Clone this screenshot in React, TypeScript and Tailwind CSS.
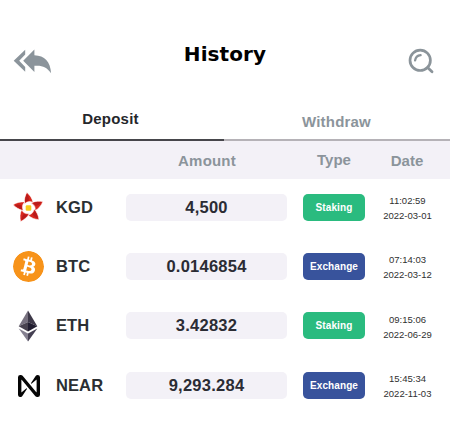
import type { ReactNode } from "react";
import { SiBitcoin } from "react-icons/si";

function BackIcon() {
  return (
    <svg viewBox="0 0 40 26" className="block h-[26px] w-[40px] fill-[#8b949b]">
      <path d="M12.2 1.8 0.7 12.8 12.2 23.7V18.9L6.2 12.8 12.2 6.6Z" />
      <path d="M21.4 1.6 10.2 12.8 21.4 23.9V17.8C28.6 17 34 19 38.1 25.2 37.4 13.6 31.6 7.5 21.4 7.2Z" />
    </svg>
  );
}

function SearchIcon() {
  return (
    <svg viewBox="0 0 28 28" className="block size-[28px]" fill="none" stroke="#8b949a">
      <circle cx="12.2" cy="12.3" r="10.2" strokeWidth="2.7" />
      <path d="M7.1 12.4C7.6 9.3 9.6 7.4 12.6 7.1" strokeWidth="2.3" strokeLinecap="round" />
      <path d="m19.6 19.6 4.4 4.2" strokeWidth="2.8" strokeLinecap="round" />
    </svg>
  );
}

function KgdLogo() {
  return (
    <svg viewBox="-16.5 -16 32 32" className="block size-[32px]">
      {[0, 72, 144, 216, 288].map((angle) => (
        <g key={angle} transform={`rotate(${angle})`}>
          <path d="M-1.6 -15.6C1.6 -12.8 3.6 -10 4.6 -5.2 1.8 -7.2 -1 -6.6 -4 -4.2 -4.4 -8.6 -3.4 -12.6 -1.6 -15.6Z" fill="#d8271d" stroke="#ffffff" strokeWidth="0.5" />
          <path d="M-1.5 -14C-0.2 -12.4 0.5 -10.4 0.4 -7.6 -1.2 -7.2 -2.4 -6.6 -3.5 -5.6 -3.5 -8.8 -2.8 -11.6 -1.5 -14Z" fill="#b81b1b" />
        </g>
      ))}
      <rect x="-2.8" y="-2.8" width="5.6" height="5.6" rx="1.2" fill="#f8cb1e" />
    </svg>
  );
}

function BtcLogo() {
  return <SiBitcoin className="block size-[31px] rounded-full bg-white text-[#f7931a]" />;
}

function EthLogo() {
  return (
    <svg viewBox="0 0 20 32" className="block h-[32px] w-[20px]">
      <path d="M10 0.5 0.7 16.3 10 12Z" fill="#77717f" />
      <path d="M10 0.5 19.3 16.3 10 12Z" fill="#3d3848" />
      <path d="M10 12 0.7 16.3 10 21.4Z" fill="#48424f" />
      <path d="M10 12 19.3 16.3 10 21.4Z" fill="#211d30" />
      <path d="M0.7 18.4 10 23.5V31.5Z" fill="#858090" />
      <path d="M19.3 18.4 10 23.5V31.5Z" fill="#454052" />
    </svg>
  );
}

function NearLogo() {
  return (
    <svg viewBox="0 0 24 24" className="ml-px block size-[22px] fill-[#050505]">
      <path d="M21.443 0c-.89 0-1.714.46-2.18 1.218l-5.017 7.448a.533.533 0 0 0 .792.7l4.938-4.282a.2.2 0 0 1 .334.151v13.41a.2.2 0 0 1-.354.128L5.03.905A2.555 2.555 0 0 0 3.078 0h-.521A2.557 2.557 0 0 0 0 2.557v18.886a2.557 2.557 0 0 0 4.736 1.338l5.017-7.448a.533.533 0 0 0-.792-.7l-4.938 4.283a.2.2 0 0 1-.333-.152V5.352a.2.2 0 0 1 .354-.128l14.924 17.87c.486.574 1.2.905 1.952.906h.521A2.558 2.558 0 0 0 24 21.445V2.557A2.558 2.558 0 0 0 21.443 0Z" />
    </svg>
  );
}

type Entry = {
  coin: string;
  logo: ReactNode;
  amount: string;
  type: "Staking" | "Exchange";
  time: string;
  date: string;
  height: string;
  dateOffset: string;
};

const entries: Entry[] = [
  { coin: "KGD", logo: <KgdLogo />, amount: "4,500", type: "Staking", time: "11:02:59", date: "2022-03-01", height: "h-[59px]", dateOffset: "-mt-px" },
  { coin: "BTC", logo: <BtcLogo />, amount: "0.0146854", type: "Exchange", time: "07:14:03", date: "2022-03-12", height: "h-[59px]", dateOffset: "-mt-px" },
  { coin: "ETH", logo: <EthLogo />, amount: "3.42832", type: "Staking", time: "09:15:06", date: "2022-06-29", height: "h-[60px]", dateOffset: "mt-0" },
  { coin: "NEAR", logo: <NearLogo />, amount: "9,293.284", type: "Exchange", time: "15:45:34", date: "2022-11-03", height: "h-[59px]", dateOffset: "-mt-px" },
];

const badgeColor = { Staking: "bg-[#2abb7f]", Exchange: "bg-[#38539c]" };

function Row({ entry }: { entry: Entry }) {
  return (
    <div className={`flex items-start ${entry.height}`}>
      <div className="flex h-[27px] w-[56px] items-center justify-center">{entry.logo}</div>
      <div className="w-[70px] text-[16.5px] leading-[27px] font-bold tracking-[0.1px] text-[#2b2f33]">{entry.coin}</div>
      <div className="h-[27px] w-[161px] rounded-[5px] bg-[#f3f1f7] text-center text-[16.5px] leading-[27px] font-bold tracking-[0.25px] text-[#2b2c34]">
        {entry.amount}
      </div>
      <div className={`ml-4 h-[27px] w-[62px] rounded-[5px] text-center text-[10px] leading-[27px] font-bold tracking-[0.1px] text-white ${badgeColor[entry.type]}`}>
        {entry.type}
      </div>
      <div className={`ml-[10px] w-[65px] text-center text-[9.5px] leading-[15px] text-[#303030] ${entry.dateOffset}`}>
        <div>{entry.time}</div>
        <div>{entry.date}</div>
      </div>
    </div>
  );
}

export default function App() {
  return (
    <div className="h-[444px] w-[450px] overflow-hidden bg-white font-['Liberation_Sans',Arial,sans-serif]">
      <header className="flex h-[95px] items-start pr-[14px] pl-[13px]">
        <button className="mt-[48px]" aria-label="Back"><BackIcon /></button>
        <h1 className="mt-[42px] mr-[11px] flex-1 text-center font-['DejaVu_Sans',Verdana,sans-serif] text-[20px] leading-[24px] font-bold tracking-[0.1px] text-black">History</h1>
        <button className="mt-[48px]" aria-label="Search"><SearchIcon /></button>
      </header>
      <nav className="flex h-[46px] text-[15px] leading-[18px] font-bold tracking-[0.2px]">
        <button className="flex w-[224px] items-start justify-center border-b-2 border-[#46464b] pt-[15px] pr-[3px] text-[#25272b]">Deposit</button>
        <button className="flex w-[226px] items-start justify-center border-b-2 border-[#b5b2b7] pt-[18px] pr-px text-[#8b949b]">Withdraw</button>
      </nav>
      <div className="flex h-[38px] bg-[#f3f1f7] pt-[11px] text-center text-[15px] leading-[18px] font-bold text-[#8b949b]">
        <div className="ml-[126px] w-[161px] pl-[1px] tracking-[0.2px]">Amount</div>
        <div className="-mt-px ml-4 w-[62px]">Type</div>
        <div className="ml-[10px] w-[65px] pr-px">Date</div>
      </div>
      <main className="pt-[15px]">
        {entries.map((entry) => (
          <Row key={entry.coin} entry={entry} />
        ))}
      </main>
    </div>
  );
}
